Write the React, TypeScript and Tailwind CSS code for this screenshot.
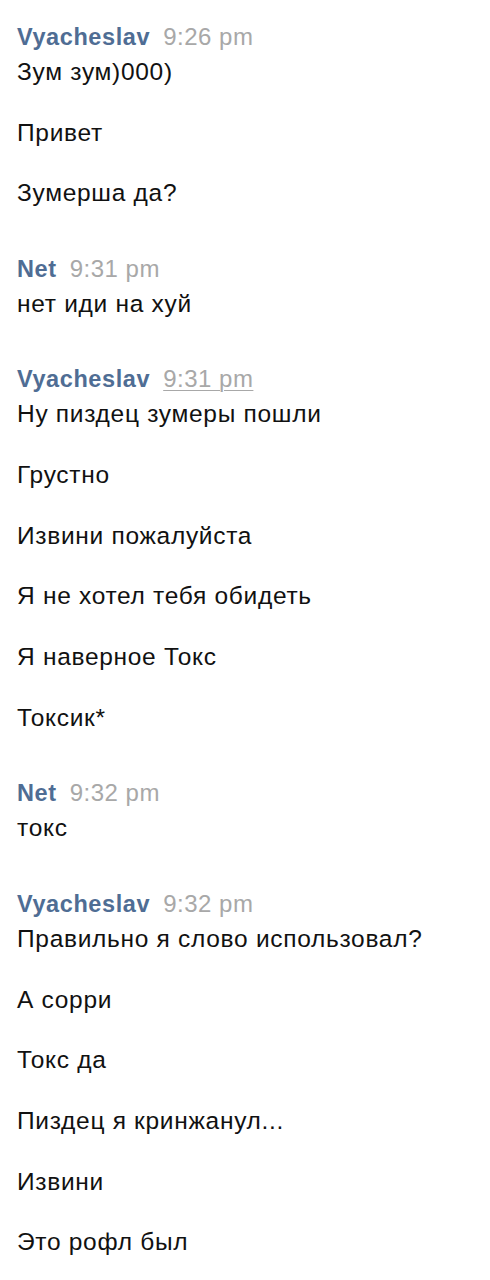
import React from "react";

type Group = { name: string; time: string; underline?: boolean; msgs: string[] };

const groups: Group[] = [
  { name: "Vyacheslav", time: "9:26 pm", msgs: ["Зум зум)000)", "Привет", "Зумерша да?"] },
  { name: "Net", time: "9:31 pm", msgs: ["нет иди на хуй"] },
  {
    name: "Vyacheslav",
    time: "9:31 pm",
    underline: true,
    msgs: [
      "Ну пиздец зумеры пошли",
      "Грустно",
      "Извини пожалуйста",
      "Я не хотел тебя обидеть",
      "Я наверное Токс",
      "Токсик*",
    ],
  },
  { name: "Net", time: "9:32 pm", msgs: ["токс"] },
  {
    name: "Vyacheslav",
    time: "9:32 pm",
    msgs: [
      "Правильно я слово использовал?",
      "А сорри",
      "Токс да",
      "Пиздец я кринжанул...",
      "Извини",
      "Это рофл был",
    ],
  },
];

export default function App() {
  return (
    <div
      className="w-[490px] h-[1280px] bg-white overflow-hidden pt-[23px] px-[17px] flex flex-col gap-[47.5px]"
      style={{ fontFamily: '"Liberation Sans", Arial, sans-serif' }}
    >
      {groups.map((g, i) => (
        <div key={i} className="flex flex-col gap-[7px]">
          <div className="flex items-baseline gap-[13px] h-[28px] leading-[28px]">
            <span className="text-[23.5px] tracking-[0.6px] font-bold text-[#4f6d94]">{g.name}</span>
            <span
              className={
                "text-[24px] tracking-[0.5px] text-[#a8a8a8]" +
                (g.underline ? " underline decoration-1 underline-offset-[3px]" : "")
              }
            >
              {g.time}
            </span>
          </div>
          <div className="flex flex-col gap-[32.7px]">
            {g.msgs.map((m, j) => (
              <div key={j} className="text-[24.5px] tracking-[0.7px] leading-[28px] text-[#111]">
                {m}
              </div>
            ))}
          </div>
        </div>
      ))}
    </div>
  );
}
